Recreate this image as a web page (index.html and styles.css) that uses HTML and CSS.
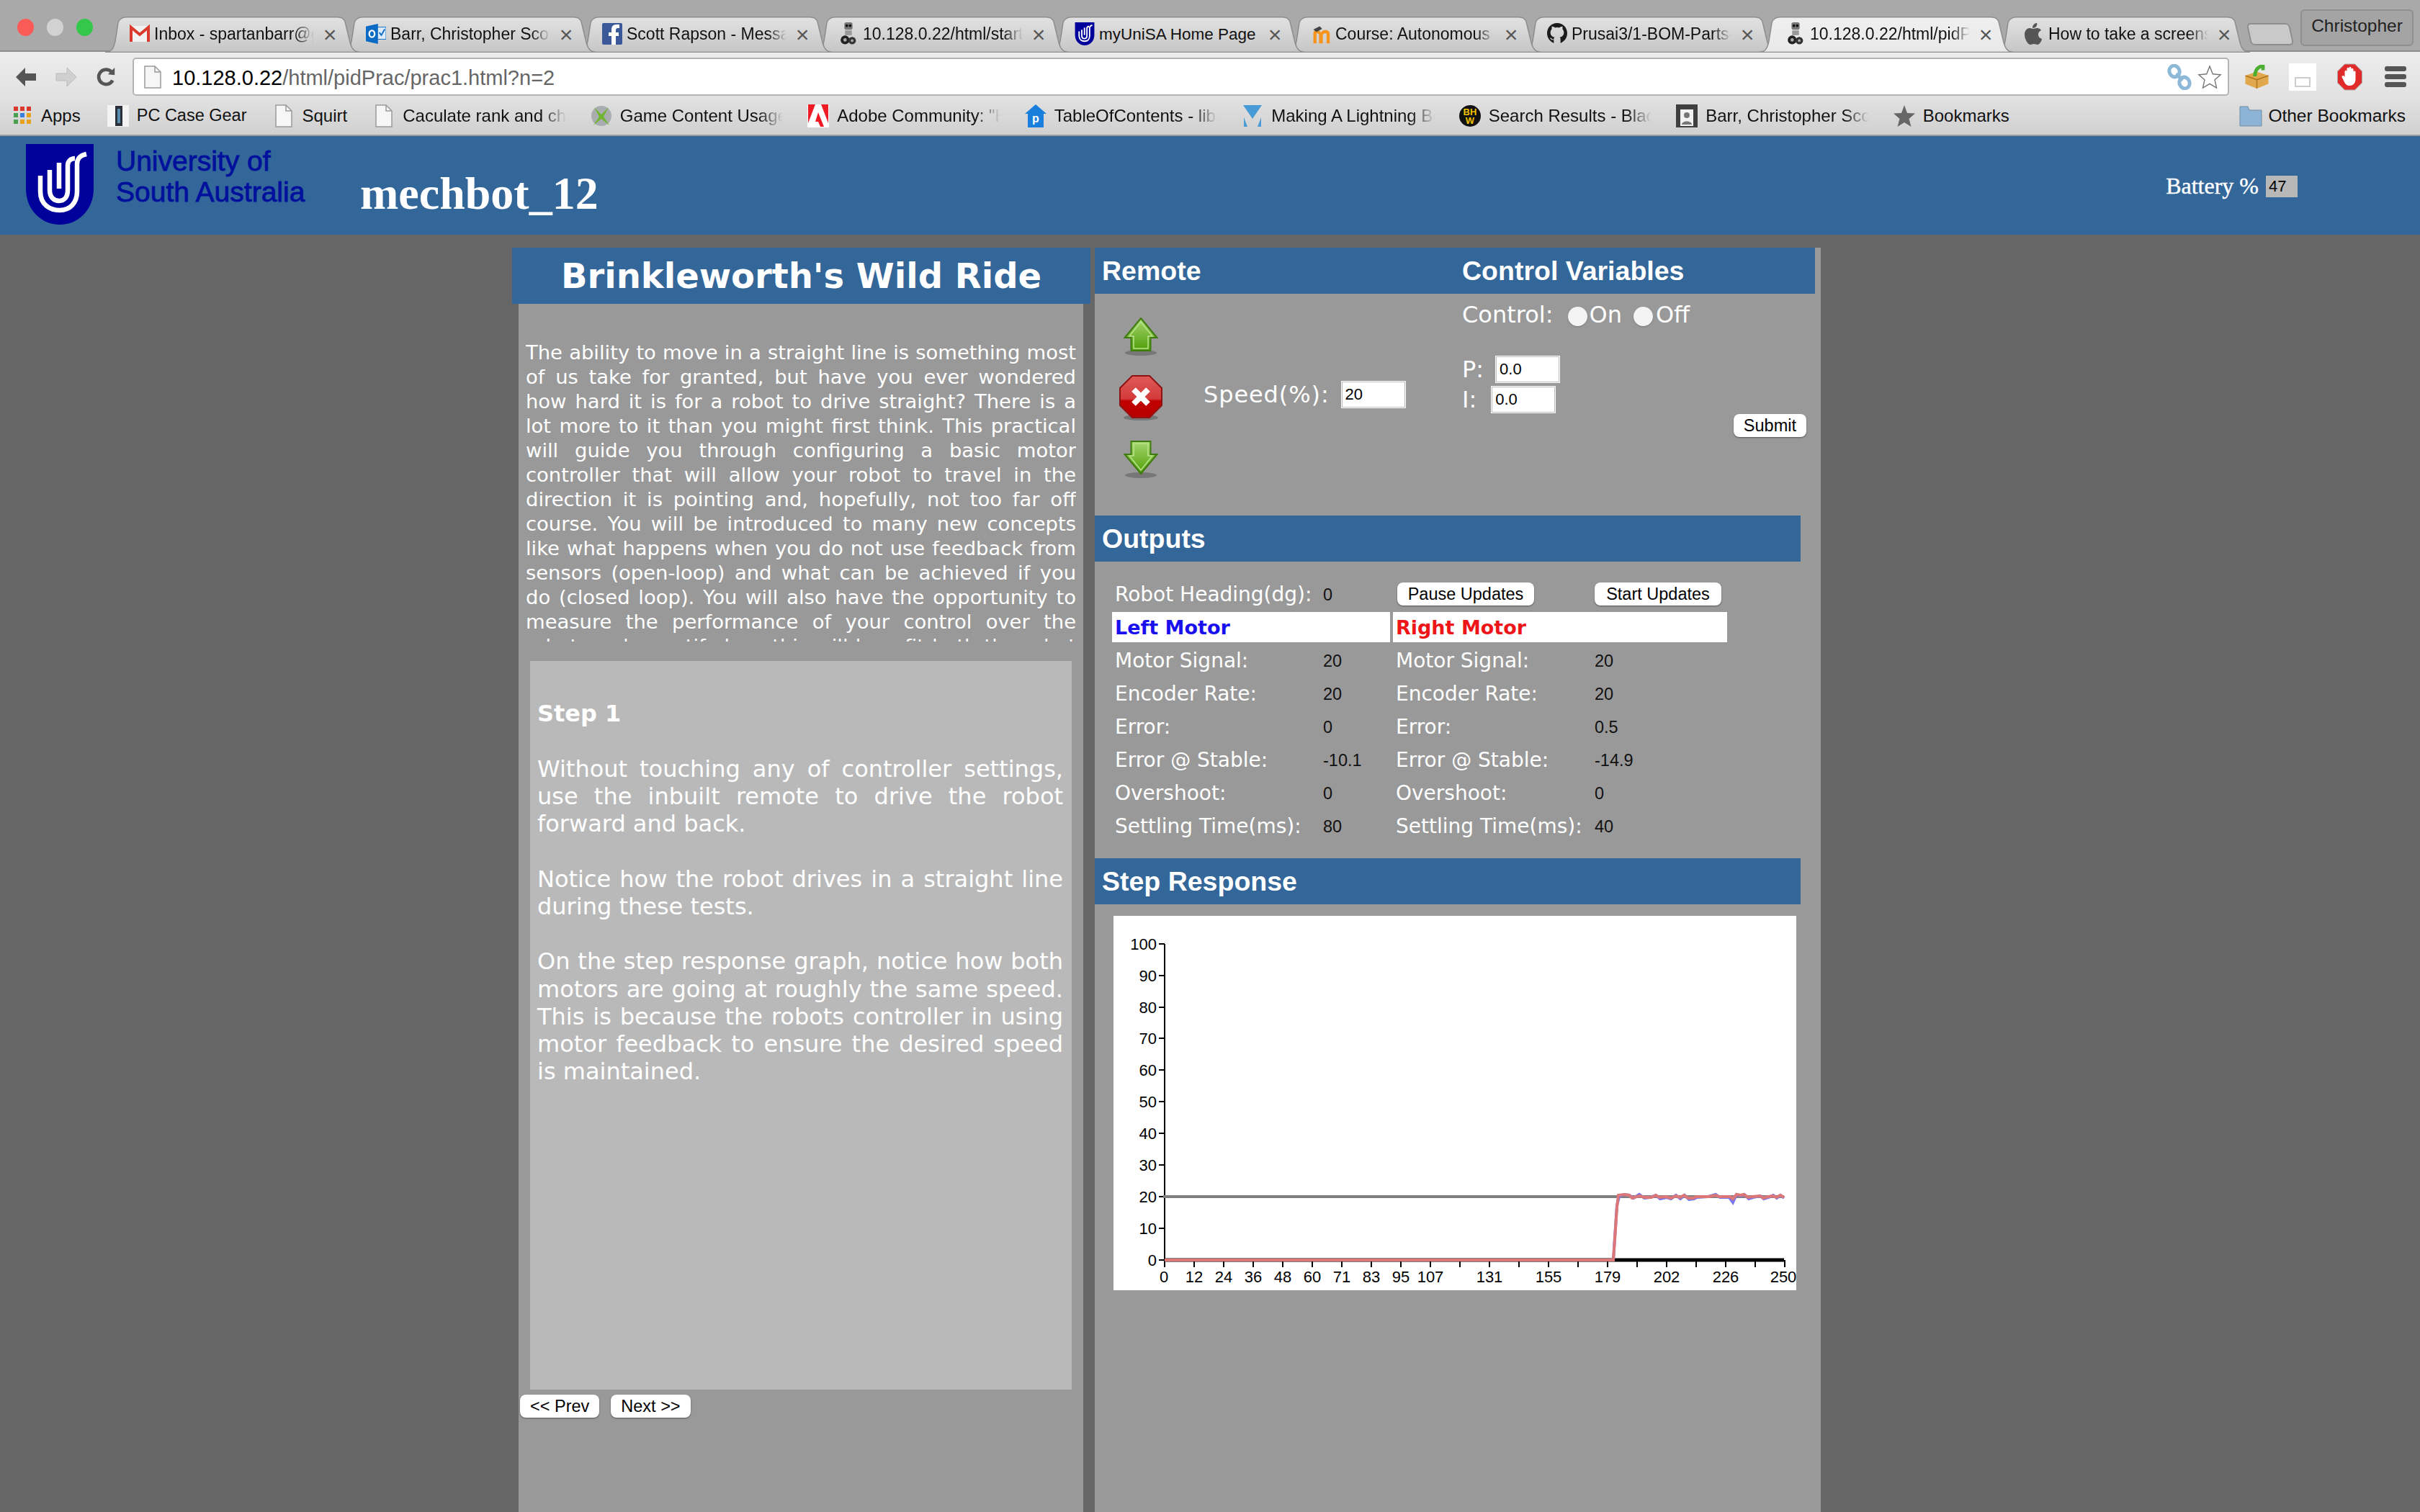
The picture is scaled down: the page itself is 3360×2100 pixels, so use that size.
FILE: index.html
```html
<!DOCTYPE html>
<html lang="en">
<head>
<meta charset="utf-8">
<title>mechbot_12</title>
<link rel="stylesheet" href="styles.css">
</head>
<body>
<svg class="defs" width="0" height="0" aria-hidden="true">
  <defs>
    <linearGradient id="tabg" x1="0" y1="0" x2="0" y2="1"><stop offset="0" stop-color="#e2e2e2"/><stop offset="1" stop-color="#c6c6c6"/></linearGradient>
    <linearGradient id="tabact" x1="0" y1="0" x2="0" y2="1"><stop offset="0" stop-color="#efefef"/><stop offset="1" stop-color="#e9e9e9"/></linearGradient>
    <linearGradient id="green" x1="0" y1="0" x2="0" y2="1"><stop offset="0" stop-color="#a5d66e"/><stop offset="1" stop-color="#4f9e08"/></linearGradient>
    <linearGradient id="red" x1="0" y1="0" x2="0" y2="1"><stop offset="0" stop-color="#de5a5a"/><stop offset=".55" stop-color="#d43a3a"/><stop offset=".6" stop-color="#c10000"/><stop offset="1" stop-color="#b80000"/></linearGradient>
    <symbol id="tabshape" viewBox="0 0 354 50" preserveAspectRatio="none">
      <path d="M0 49.5C9 49.5 12 44 14 34L18 9C19.500 3 23 .8 30 .8H322C329 .8 332 3 333.500 9L340 36C342.500 45 346 49.500 354 49.500Z" fill="url(#tabg)" stroke="#8e8e8e" stroke-width="1.500"/>
    </symbol>
    <symbol id="tabshape-active" viewBox="0 0 354 50" preserveAspectRatio="none">
      <path d="M0 49.5C9 49.5 12 44 14 34L18 9C19.500 3 23 .8 30 .8H322C329 .8 332 3 333.500 9L340 36C342.500 45 346 49.500 354 49.500Z" fill="url(#tabact)" stroke="#8e8e8e" stroke-width="1.500"/>
    </symbol>
    <symbol id="robot" viewBox="0 0 24 34">
      <rect x="6" y="0" width="12" height="11" rx="3" fill="#777"/><circle cx="9.500" cy="5" r="2" fill="#111"/><circle cx="14.500" cy="5" r="2" fill="#111"/>
      <rect x="7" y="12" width="10" height="7" fill="#999"/>
      <circle cx="7" cy="26" r="6.500" fill="#222"/><circle cx="17.500" cy="27" r="5.500" fill="#333"/><circle cx="7" cy="26" r="2.500" fill="#aaa"/><circle cx="17.500" cy="27" r="2" fill="#aaa"/>
    </symbol>
    <symbol id="shield" viewBox="0 0 94 112">
      <path d="M0 0H94V62C94 92 72 112 47 112C22 112 0 92 0 62Z" fill="#00009a"/>
      <g fill="none" stroke="#fff" stroke-width="6.500">
        <path d="M20 44V66C20 84 33 92 47 92C61 92 71 82 71 66V28C71 20 75 16 84 14"/>
        <path d="M33 36V64C33 74 39 79 46 79C53 79 58 74 58 64V30C58 24 62 20 68 20"/>
        <path d="M46 26V62"/>
      </g>
    </symbol>
    <symbol id="doc" viewBox="0 0 24 32">
      <path d="M1 1H15L23 9V31H1Z" fill="#f6f6f6" stroke="#9a9a9a" stroke-width="1.500"/><path d="M15 1V9H23" fill="none" stroke="#9a9a9a" stroke-width="1.500"/>
    </symbol>
    <symbol id="arrow" viewBox="0 0 48 54">
      <ellipse cx="24" cy="49" rx="22" ry="4" fill="#777"/>
      <path d="M24 1 46.500 28H37.500V46H10.500V28H1.500Z" fill="url(#green)" stroke="#3e7a10" stroke-width="2"/>
      <path d="M24 6 40 26H34V43H14V26H8Z" fill="none" stroke="#b9e38a" stroke-width="1.500"/>
    </symbol>
    <symbol id="arrow-dn" viewBox="0 0 48 54">
      <ellipse cx="24" cy="49" rx="22" ry="4" fill="#777"/>
      <path d="M24 47 46.500 20H37.500V2H10.500V20H1.500Z" fill="url(#green)" stroke="#3e7a10" stroke-width="2"/>
      <path d="M24 42 40 22H34V5H14V22H8Z" fill="none" stroke="#b9e38a" stroke-width="1.500"/>
    </symbol>
  </defs>
</svg>

<div class="tabstrip">
  <div class="lights"><span class="light light-red"></span><span class="light light-grey"></span><span class="light light-green"></span></div>
  <div class="tabs">
    <div class="tab"><svg class="tab-bg"><use href="#tabshape"/></svg>
      <svg class="fav" viewBox="0 0 28 24"><rect x="0" y="1" width="28" height="22" fill="#f1f1f1"/><path d="M2 23V3L14 13 26 3V23" fill="none" stroke="#d93a2c" stroke-width="4"/></svg>
      <span class="tab-title">Inbox - spartanbarr@gmail.com</span><span class="tab-x">×</span></div>
    <div class="tab"><svg class="tab-bg"><use href="#tabshape"/></svg>
      <svg class="fav" viewBox="0 0 30 30"><rect x="11" y="5" width="19" height="18" fill="#dceafa" stroke="#0a6ac4"/><path d="M0 4 18 0V30L0 26Z" fill="#0a6ac4"/><ellipse cx="9" cy="15" rx="4" ry="5" fill="none" stroke="#fff" stroke-width="2.500"/><path d="M20 13 23 17 28 8" fill="none" stroke="#0a6ac4" stroke-width="2"/></svg>
      <span class="tab-title">Barr, Christopher Scott</span><span class="tab-x">×</span></div>
    <div class="tab"><svg class="tab-bg"><use href="#tabshape"/></svg>
      <svg class="fav" viewBox="0 0 28 30"><rect width="28" height="30" rx="2" fill="#3b5998"/><path d="M19 30V18H23V13H19V10C19 8 20 7 22 7H24V2H20C15 2 13 5 13 9V13H9V18H13V30Z" fill="#fff"/></svg>
      <span class="tab-title">Scott Rapson - Messages</span><span class="tab-x">×</span></div>
    <div class="tab"><svg class="tab-bg"><use href="#tabshape"/></svg>
      <svg class="fav"><use href="#robot"/></svg>
      <span class="tab-title">10.128.0.22/html/start.html</span><span class="tab-x">×</span></div>
    <div class="tab"><svg class="tab-bg"><use href="#tabshape"/></svg>
      <svg class="fav"><use href="#shield"/></svg>
      <span class="tab-title tab-title-full">myUniSA Home Page</span><span class="tab-x">×</span></div>
    <div class="tab"><svg class="tab-bg"><use href="#tabshape"/></svg>
      <svg class="fav" viewBox="0 0 32 30"><path d="M4 30V14C4 10 7 9 9 9C12 9 14 10 16 13C18 10 20 9 23 9C27 9 30 11 30 16V30H25V16C25 14 24 14 23 14C21 14 19 15 19 17V30H13V17C13 15 12 14 10 14C9 14 9 15 9 16V30Z" fill="#f7941e"/><path d="M4 8 14 3 18 7 9 12Z" fill="#444"/></svg>
      <span class="tab-title">Course: Autonomous Systems</span><span class="tab-x">×</span></div>
    <div class="tab"><svg class="tab-bg"><use href="#tabshape"/></svg>
      <svg class="fav" viewBox="0 0 30 32"><path d="M15 0C6 0 0 7 0 15C0 22 4 27 10 30V25C6 26 5 23 4 22C7 22 8 25 10 24C10 23 10 22 11 21C7 20 5 18 5 14C5 12 6 10 7 9C7 8 7 6 7 5C9 5 11 6 12 7C14 6 16 6 18 7C19 6 21 5 23 5C23 6 23 8 23 9C24 10 25 12 25 14C25 18 23 20 19 21C20 22 20 24 20 25V30C26 27 30 22 30 15C30 7 24 0 15 0Z" fill="#1b1b1b"/></svg>
      <span class="tab-title">Prusai3/1-BOM-Parts-List</span><span class="tab-x">×</span></div>
    <div class="tab tab-active"><svg class="tab-bg"><use href="#tabshape-active"/></svg>
      <svg class="fav"><use href="#robot"/></svg>
      <span class="tab-title">10.128.0.22/html/pidPrac/prac1</span><span class="tab-x">×</span></div>
    <div class="tab tab-last"><svg class="tab-bg"><use href="#tabshape"/></svg>
      <svg class="fav" viewBox="0 0 28 30"><path d="M20 16C20 12 23 11 24 10C22 7 19 7 18 7C16 7 15 8 13 8C11 8 10 7 8 7C5 7 1 10 1 16C1 23 6 30 9 30C11 30 12 29 14 29C16 29 17 30 19 30C22 30 25 24 25 22C23 21 20 20 20 16ZM17 5C18 3 19 2 18 0C16 0 14 1 13 3C12 4 12 6 12 7C14 7 16 6 17 5Z" fill="#555"/></svg>
      <span class="tab-title">How to take a screenshot</span><span class="tab-x">×</span></div>
  </div>
  <div class="newtab"></div>
  <div class="profile">Christopher</div>
</div>

<div class="toolbar">
  <div class="nav">
    <svg class="nav-ico" viewBox="0 0 30 28"><path d="M1 14 14 1V9H29V19H14V27Z" fill="#555"/></svg>
    <svg class="nav-ico" viewBox="0 0 30 28"><path d="M29 14 16 1V9H1V19H16V27Z" fill="#d0d0d0" stroke="#bbb"/></svg>
    <svg class="nav-ico" viewBox="0 0 30 30"><path d="M24 20A11 11 0 1 1 22 7" fill="none" stroke="#555" stroke-width="5"/><path d="M17 11 27 12V1Z" fill="#555"/></svg>
  </div>
  <div class="url">
    <svg class="url-doc"><use href="#doc"/></svg>
    <span class="url-text"><span class="url-host">10.128.0.22</span>/html/pidPrac/prac1.html?n=2</span>
    <svg class="url-ico" viewBox="0 0 34 36"><g fill="none" stroke="#8db8d8" stroke-width="5"><ellipse cx="10" cy="10" rx="7" ry="8" transform="rotate(-20 10 10)"/><ellipse cx="24" cy="26" rx="7" ry="8" transform="rotate(-20 24 26)"/><path d="M12 14 22 22"/></g></svg>
    <svg class="url-ico" viewBox="0 0 36 36"><path d="M18 2 22.500 13.500 34 14.500 25.500 22 28 34 18 28 8 34 10.500 22 2 14.500 13.500 13.500Z" fill="#fff" stroke="#777" stroke-width="1.500"/></svg>
  </div>
  <div class="extras">
    <svg class="ext-ico" viewBox="0 0 38 36"><path d="M19 10 36 16V28L19 35 2 28V16Z" fill="#e2a94c"/><path d="M2 16 19 22 36 16M19 22V35" fill="none" stroke="#a9701e" stroke-width="1.500"/><path d="M16 17C16 8 20 3 28 1V8" fill="none" stroke="#4cae2e" stroke-width="5"/></svg>
    <div class="ext-blank"><span class="ext-blank-box"></span></div>
    <svg class="ext-ico ext-stop" viewBox="0 0 36 38"><path d="M11 1H25L35 11V27L25 37H11L1 27V11Z" fill="#e12b2b" stroke="#aaa"/><path d="M11 12C11 9 14 9 14 12V8C14 5 17 5 17 8V7C17 4 20 4 20 7V9C20 6 23 6 23 9V12C23 10 26 10 26 12V22C26 28 22 31 18 31C14 31 12 29 10 25L7 19C7 17 9 16 11 19Z" fill="#fff"/></svg>
    <div class="menu"><span></span><span></span><span></span></div>
  </div>
</div>

<div class="bookmarks">
  <div class="bm"><svg class="bm-ico" viewBox="0 0 32 32"><g><rect x="4" y="3" width="6" height="6" fill="#d9382e"/><rect x="13" y="3" width="6" height="6" fill="#d9382e"/><rect x="22" y="3" width="6" height="6" fill="#d9382e"/><rect x="4" y="12" width="6" height="6" fill="#4ba04f"/><rect x="13" y="12" width="6" height="6" fill="#3a7fe0"/><rect x="22" y="12" width="6" height="6" fill="#e9a21e"/><rect x="4" y="21" width="6" height="6" fill="#4ba04f"/><rect x="13" y="21" width="6" height="6" fill="#e9a21e"/><rect x="22" y="21" width="6" height="6" fill="#e9a21e"/></g></svg><span class="bm-text">Apps</span></div>
  <div class="bm"><svg class="bm-ico" viewBox="0 0 32 32"><rect x="1" y="1" width="30" height="30" fill="#f3f3f3"/><path d="M12 2H22V30H12Z" fill="#2a2f38"/><path d="M15 6H19V26H15Z" fill="#5a8bb0"/></svg><span class="bm-text">PC Case Gear</span></div>
  <div class="bm"><svg class="bm-ico"><use href="#doc"/></svg><span class="bm-text">Squirt</span></div>
  <div class="bm"><svg class="bm-ico"><use href="#doc"/></svg><span class="bm-text bm-fade">Caculate rank and change</span></div>
  <div class="bm"><svg class="bm-ico" viewBox="0 0 32 32"><circle cx="16" cy="16" r="14" fill="#a9adb0"/><path d="M6 4 16 14 26 4 19 17 27 29 16 20 5 29 13 17Z" fill="#6fb52e"/></svg><span class="bm-text bm-fade">Game Content Usage Rules</span></div>
  <div class="bm"><svg class="bm-ico" viewBox="0 0 32 32"><rect x="1" y="0" width="30" height="32" fill="#fff"/><path d="M2 0H12L2 26ZM30 0H20L30 26ZM16 11 24 31H19L16 24H12Z" fill="#ed1c24"/></svg><span class="bm-text bm-fade">Adobe Community: "How</span></div>
  <div class="bm"><svg class="bm-ico" viewBox="0 0 32 32"><path d="M16 0 31 13H27V32H5V13H1Z" fill="#1a7fdc"/><text x="16" y="25" class="bm-mini">p</text></svg><span class="bm-text bm-fade">TableOfContents - libmaple</span></div>
  <div class="bm"><svg class="bm-ico" viewBox="0 0 32 32"><path d="M3 1H29L16 20ZM4 18 9 31H4ZM28 18V31H23Z" fill="#489bd6"/></svg><span class="bm-text bm-fade">Making A Lightning Bolt Effect</span></div>
  <div class="bm"><svg class="bm-ico" viewBox="0 0 32 32"><circle cx="16" cy="16" r="15" fill="#111"/><text x="16" y="15" class="bm-bhw">BH</text><text x="16" y="27" class="bm-bhw">W</text></svg><span class="bm-text bm-fade">Search Results - Black Hat</span></div>
  <div class="bm"><svg class="bm-ico" viewBox="0 0 32 32"><rect x="1" y="0" width="30" height="32" fill="#3f3f3f"/><rect x="7" y="7" width="18" height="23" fill="#f2f2f2"/><circle cx="16" cy="15" r="4" fill="#777"/><path d="M9 28C9 22 23 22 23 28Z" fill="#777"/></svg><span class="bm-text bm-fade">Barr, Christopher Scott</span></div>
  <div class="bm"><svg class="bm-ico" viewBox="0 0 32 32"><path d="M16 1 20 12 31 12.500 22.500 20 25.500 31 16 25 6.500 31 9.500 20 1 12.500 12 12Z" fill="#666"/></svg><span class="bm-text">Bookmarks</span></div>
  <div class="bm bm-other"><svg class="bm-ico" viewBox="0 0 32 32"><path d="M1 8V3H12L14 8H31V30H1Z" fill="#8db3d6" stroke="#6f8ea8"/></svg><span class="bm-text">Other Bookmarks</span></div>
</div>

<header class="site-header">
  <svg class="logo"><use href="#shield"/></svg>
  <div class="uni-name">University of<br>South Australia</div>
  <h1 class="robot-name">mechbot_12</h1>
  <div class="battery"><span>Battery %</span><span class="battery-val">47</span></div>
</header>

<main class="page">
  <section class="left-col">
    <h2 class="prac-title">Brinkleworth's Wild Ride</h2>
    <div class="left-panel">
      <div class="intro">
        <p>The ability to move in a straight line is something most of us take for granted, but have you ever wondered how hard it is for a robot to drive straight? There is a lot more to it than you might first think. This practical will guide you through configuring a basic motor controller that will allow your robot to travel in the direction it is pointing and, hopefully, not too far off course. You will be introduced to many new concepts like what happens when you do not use feedback from sensors (open-loop) and what can be achieved if you do (closed loop). You will also have the opportunity to measure the performance of your control over the robot, and quantify how this will benefit both the robot in the long term.</p>
      </div>
      <div class="step">
        <p class="step-head">Step 1</p>
        <p>Without touching any of controller settings, use the inbuilt remote to drive the robot forward and back.</p>
        <p>Notice how the robot drives in a straight line during these tests.</p>
        <p>On the step response graph, notice how both motors are going at roughly the same speed. This is because the robots controller in using motor feedback to ensure the desired speed is maintained.</p>
      </div>
      <div class="pager"><button class="btn">&lt;&lt; Prev</button><button class="btn">Next &gt;&gt;</button></div>
    </div>
  </section>

  <section class="right-col">
    <div class="bar bar-top"><h3 class="bar-title bar-remote">Remote</h3><h3 class="bar-title">Control Variables</h3></div>
    <div class="remote-body">
      <div class="remote">
        <div class="drive">
          <svg class="arrow"><use href="#arrow"/></svg>
          <svg class="stop" viewBox="0 0 60 64"><ellipse cx="30" cy="59" rx="24" ry="4" fill="#777"/><path d="M18 1H42L59 18V42L42 59H18L1 42V18Z" fill="url(#red)" stroke="#8e1414" stroke-width="2"/><path d="M20 20 40 40M40 20 20 40" stroke="#fff" stroke-width="8"/></svg>
          <svg class="arrow"><use href="#arrow-dn"/></svg>
        </div>
        <label class="speed">Speed(%):<input class="field" type="text" value="20"></label>
      </div>
      <div class="control">
        <div class="ctl-row">Control:<input class="radio radio-first" type="radio" name="c"><span>On</span><input class="radio radio-second" type="radio" name="c"><span>Off</span></div>
        <label class="gain gain-p">P:<input class="field" type="text" value="0.0"></label>
        <label class="gain gain-i">I:<input class="field" type="text" value="0.0"></label>
        <div class="submit-row"><button class="btn">Submit</button></div>
      </div>
    </div>

    <div class="bar bar-short"><h3 class="bar-title">Outputs</h3></div>
    <div class="outputs">
      <div class="lab">Robot Heading(dg):</div><div class="val">0</div>
      <div class="cell-btn"><button class="btn btn-pause">Pause Updates</button></div><div class="cell-btn"><button class="btn btn-start">Start Updates</button></div>
      <div class="motor motor-l">Left Motor</div><div class="motor motor-r">Right Motor</div>
      <div class="lab">Motor Signal:</div><div class="val">20</div><div class="lab">Motor Signal:</div><div class="val val-r">20</div>
      <div class="lab">Encoder Rate:</div><div class="val">20</div><div class="lab">Encoder Rate:</div><div class="val val-r">20</div>
      <div class="lab">Error:</div><div class="val">0</div><div class="lab">Error:</div><div class="val val-r">0.5</div>
      <div class="lab">Error @ Stable:</div><div class="val">-10.1</div><div class="lab">Error @ Stable:</div><div class="val val-r">-14.9</div>
      <div class="lab">Overshoot:</div><div class="val">0</div><div class="lab">Overshoot:</div><div class="val val-r">0</div>
      <div class="lab">Settling Time(ms):</div><div class="val">80</div><div class="lab">Settling Time(ms):</div><div class="val val-r">40</div>
    </div>

    <div class="bar bar-short"><h3 class="bar-title">Step Response</h3></div>
    <svg class="chart" viewBox="0 0 948 520">
      <path d="M71 39V478" class="axis"/>
      <path d="M63 39H71M63 83H71M63 127H71M63 170H71M63 214H71M63 258H71M63 302H71M63 346H71M63 390H71M63 434H71M63 478H71" class="axis"/>
      <path d="M71 478v10M112 478v10M153 478v10M194 478v10M235 478v10M276 478v10M317 478v10M358 478v10M399 478v10M440 478v10M481 478v10M522 478v10M563 478v10M604 478v10M645 478v10M686 478v10M727 478v10M768 478v10M809 478v10M850 478v10M891 478v10M932 478v10" class="axis"/>
      <g class="ylab"><text x="60" y="47">100</text><text x="60" y="91">90</text><text x="60" y="135">80</text><text x="60" y="178">70</text><text x="60" y="222">60</text><text x="60" y="266">50</text><text x="60" y="310">40</text><text x="60" y="354">30</text><text x="60" y="398">20</text><text x="60" y="442">10</text><text x="60" y="486">0</text></g>
      <g class="xlab"><text x="70" y="509">0</text><text x="112" y="509">12</text><text x="153" y="509">24</text><text x="194" y="509">36</text><text x="235" y="509">48</text><text x="276" y="509">60</text><text x="317" y="509">71</text><text x="358" y="509">83</text><text x="399" y="509">95</text><text x="440" y="509">107</text><text x="522" y="509">131</text><text x="604" y="509">155</text><text x="686" y="509">179</text><text x="768" y="509">202</text><text x="850" y="509">226</text><text x="930" y="509">250</text></g>
      <path d="M71 478H931" class="line-base"/>
      <path d="M69 390H931" class="line-set"/>
      <path d="M71 478H694L699 402 702 390 709 387 716 388 722 392 730 387 737 392 745 391 753 388 759 393 768 391 774 393 781 388 787 393 793 388 799 394 806 393 810 391 826 390 836 387 842 391 855 391 860 398 865 387 871 389 876 387 882 393 888 391 898 389 903 393 910 391 916 388 921 392 926 388 931 392" class="line-blue"/>
      <path d="M71 478H694L699 405 701 388 709 387 716 388 720 392 726 390 731 389 737 391 747 391 753 388 758 391 767 390 774 392 781 389 787 391 792 388 798 392 805 392 809 390 827 390 836 388 841 390 856 390 860 393 865 387 871 388 875 387 881 391 887 390 898 389 902 392 909 390 916 389 920 391 926 388 931 391" class="line-red"/>
    </svg>
  </section>
</main>
</body>
</html>
```
FILE: styles.css
```css
* { box-sizing: border-box; }
html, body { margin: 0; padding: 0; }
body {
  width: 3360px;
  height: 2100px;
  overflow: hidden;
  background: #666;
  font-family: "DejaVu Sans", sans-serif;
}
.defs { position: absolute; }

/* window chrome */
.tabstrip {
  height: 72px;
  display: flex;
  background: #a9a9a9;
  border-bottom: 2px solid #8e8e8e;
  font-family: "Liberation Sans", Arial, sans-serif;
  color: #111;
  position: relative;
}
.lights { width: 146px; display: flex; gap: 18px; padding: 26px 0 0 24px; }
.light { width: 23px; height: 24px; border-radius: 50%; }
.light-red { background: #fb5b57; }
.light-grey { background: #d2d2d2; }
.light-green { background: #34c84a; }
.tabs { display: flex; padding-top: 23px; }
.tab {
  position: relative;
  width: 354px;
  height: 49px;
  margin-right: -26px;
  display: flex;
  align-items: center;
  padding-left: 34px;
  font-size: 23px;
}
.tab:nth-child(1) { z-index: 9; }
.tab:nth-child(2) { z-index: 8; }
.tab:nth-child(3) { z-index: 7; }
.tab:nth-child(4) { z-index: 6; }
.tab:nth-child(5) { z-index: 5; }
.tab:nth-child(6) { z-index: 4; }
.tab:nth-child(7) { z-index: 3; }
.tab-active { z-index: 20 !important; padding-left: 37px; }
.tab-last { z-index: 1; padding-left: 40px; }
.tab-bg { position: absolute; left: 0; top: 0; width: 354px; height: 50px; }
.fav { position: relative; width: 28px; height: 32px; flex: none; margin-right: 6px; margin-top: -1px; }
.tab-title {
  position: relative;
  width: 222px;
  flex: none;
  white-space: nowrap;
  overflow: hidden;
  margin-top: 0;
  -webkit-mask-image: linear-gradient(to right, #000 88%, transparent 100%);
  mask-image: linear-gradient(to right, #000 88%, transparent 100%);
}
.tab-title-full { -webkit-mask-image: none; mask-image: none; font-size: 22.500px; }
.tab-x { position: relative; width: 24px; margin-left: 10px; text-align: center; font-size: 32px; line-height: 30px; color: #555; margin-top: 0; }
.newtab {
  position: absolute;
  left: 3122px;
  top: 32px;
  width: 60px;
  height: 31px;
  background: #c9c9c9;
  border: 2px solid #8e8e8e;
  border-radius: 6px;
  transform: skewX(12deg);
}
.profile {
  position: absolute;
  left: 3194px;
  top: 13px;
  width: 157px;
  height: 51px;
  background: #a4a4a4;
  border: 2px solid #8f8f8f;
  border-radius: 6px;
  text-align: center;
  font-size: 24.500px;
  line-height: 42px;
  color: #222;
}
.toolbar {
  height: 62px;
  display: flex;
  align-items: flex-start;
  padding-top: 8px;
  background: linear-gradient(#ececec, #e2e2e2);
}
.nav { width: 184px; height: 53px; display: flex; align-items: center; gap: 26px; padding-left: 21px; flex: none; }
.nav-ico { width: 30px; height: 28px; flex: none; }
.url {
  width: 2911px;
  height: 53px;
  flex: none;
  display: flex;
  align-items: center;
  background: #fff;
  border: 2px solid #b4b4b4;
  border-radius: 5px;
  padding-left: 14px;
  font-family: "Liberation Sans", Arial, sans-serif;
  font-size: 29px;
  color: #666;
}
.url-doc { width: 24px; height: 32px; margin-right: 15px; flex: none; }
.url-text { flex: 1; white-space: nowrap; padding-top: 3px; }
.url-host { color: #000; }
.url-ico { width: 34px; height: 36px; margin-right: 8px; flex: none; }
.extras { display: flex; align-items: center; height: 53px; flex: 1; padding-left: 20px; }
.ext-ico { width: 37px; height: 34px; flex: none; }
.ext-blank {
  width: 38px;
  height: 38px;
  flex: none;
  margin-left: 26px;
  background: #fff;
  display: flex;
  align-items: flex-end;
  justify-content: center;
  padding-bottom: 5px;
}
.ext-blank-box { width: 22px; height: 14px; border: 2px solid #ccc; }
.ext-stop { margin-left: 28px; height: 38px; }
.menu { margin-left: 30px; width: 30px; display: flex; flex-direction: column; gap: 4px; }
.menu span { height: 7px; border-radius: 3px; background: #555; }
.bookmarks {
  height: 55px;
  display: flex;
  align-items: center;
  gap: 33px;
  padding: 0 20px 0 15px;
  background: linear-gradient(#e2e2e2, #d0d0d0);
  border-bottom: 2px solid #9a9a9a;
  font-family: "Liberation Sans", Arial, sans-serif;
  font-size: 24px;
  color: #111;
}
.bm { display: flex; align-items: center; gap: 10px; }
.bm:first-child { margin-right: 3px; }
.bm:nth-child(2) .bm-text { font-size: 23.500px; }
.bm:nth-child(2), .bm:nth-child(3) { margin-right: 2px; }
.bm-other { margin-left: auto; font-size: 24.500px; gap: 8px; }
.bm-ico { width: 32px; height: 32px; flex: none; }
.bm-text { white-space: nowrap; }
.bm-fade {
  width: 226.500px;
  overflow: hidden;
  -webkit-mask-image: linear-gradient(to right, #000 85%, transparent 100%);
  mask-image: linear-gradient(to right, #000 85%, transparent 100%);
}
.bm-mini { font: bold 16px "Liberation Sans", sans-serif; fill: #fff; text-anchor: middle; }
.bm-bhw { font: bold 13px "Liberation Sans", sans-serif; fill: #f2c200; text-anchor: middle; }

/* site header */
.site-header {
  height: 137px;
  display: flex;
  align-items: flex-start;
  background: #336699;
  padding: 11px 170px 0 36px;
}
.logo { width: 94px; height: 112px; flex: none; }
.uni-name {
  margin: 2px 0 0 31px;
  width: 339px;
  font-family: "Liberation Sans", Arial, sans-serif;
  font-size: 39px;
  line-height: 43px;
  color: #00109c;
  -webkit-text-stroke: .8px #00109c;
}
.robot-name {
  margin: 32px 0 0 0;
  font-family: "Liberation Serif", "Times New Roman", serif;
  font-size: 64px;
  line-height: 74px;
  font-weight: bold;
  color: #fff;
}
.battery {
  margin: 40px 0 0 auto;
  display: flex;
  align-items: center;
  gap: 10px;
  font-family: "Liberation Serif", "Times New Roman", serif;
  font-size: 32px;
  line-height: 36px;
  color: #fff;
  -webkit-text-stroke: .4px #fff;
}
.battery-val {
  width: 44px;
  height: 30px;
  padding-left: 4px;
  background: #b8b8b8;
  color: #000;
  font-family: "Liberation Sans", Arial, sans-serif;
  font-size: 22px;
  line-height: 30px;
  margin-top: 2px;
  -webkit-text-stroke: 0;
}

/* page */
.page { display: flex; padding: 18px 0 0 711px; height: 1774px; }
.left-col { width: 803px; flex: none; display: flex; flex-direction: column; }
.prac-title {
  margin: 0;
  height: 78px;
  flex: none;
  background: #336699;
  color: #fff;
  text-align: center;
  font-size: 48px;
  line-height: 78px;
  font-weight: bold;
}
.left-panel { flex: 1; margin: 0 10px 0 9px; background: #999; padding: 28px 10px 0 10px; color: #fff; }
.intro { height: 441px; overflow: hidden; font-size: 27.400px; line-height: 34px; text-align: justify; }
.intro p { margin: 23px 0 0; }
.step {
  margin: 27px 6px 0 6px;
  height: 1012px;
  background: #b9b9b9;
  padding: 54px 12px 0 10px;
  font-size: 32px;
  line-height: 38.250px;
  text-align: justify;
}
.step p { margin: 0 0 38.250px; }
.step-head { font-weight: bold; }
.pager { display: flex; gap: 16px; margin: 7px 0 0 -8px; }
.btn {
  height: 32px;
  padding: 0 14px;
  border: 0;
  border-radius: 8px;
  background: #fff;
  box-shadow: 0 1px 2px #555;
  color: #000;
  font-family: "Liberation Sans", Arial, sans-serif;
  font-size: 23.500px;
  line-height: 32px;
}
.right-col { width: 1008px; flex: none; margin-left: 6px; background: #999; color: #fff; }
.bar { height: 64px; background: #336699; display: flex; align-items: center; padding-left: 10px; }
.bar-top { width: 1000px; }
.bar-short { width: 980px; }
.bar-title {
  margin: 0;
  font-family: "Liberation Sans", Arial, sans-serif;
  font-size: 37.500px;
  font-weight: bold;
  color: #fff;
}
.bar-remote { width: 500px; }
.remote-body { height: 308px; display: flex; }
.remote { width: 510px; flex: none; display: flex; align-items: center; padding: 0 0 18px 34px; }
.drive { display: flex; flex-direction: column; align-items: center; gap: 26px; width: 60px; }
.arrow { width: 48px; height: 54px; display: block; }
.stop { width: 60px; height: 64px; display: block; }
.speed { margin: -10px 0 0 57px; font-size: 32px; letter-spacing: .9px; display: flex; align-items: center; gap: 16px; }
.field {
  width: 90px;
  height: 38px;
  margin: 0;
  padding: 0 5px;
  border: 1px solid #fff;
  box-shadow: inset 0 0 0 1px #bdbdbd, inset 0 0 0 2px #fff;
  background: #fff;
  color: #000;
  font-family: "Liberation Sans", Arial, sans-serif;
  font-size: 22px;
  letter-spacing: 0;
}
.control { width: 478px; padding-top: 10px; font-size: 32px; }
.ctl-row { height: 38px; line-height: 38px; display: flex; align-items: center; }
.radio {
  appearance: none;
  width: 27px;
  height: 27px;
  margin: 4px 4px 0 8px;
  border-radius: 50%;
  background: #f4f4f4;
  box-shadow: 0 1px 2px #777;
}
.radio-first { margin-left: 21px; margin-right: 2px; }
.radio-second { margin-left: 16px; }
.gain { display: flex; align-items: center; height: 38px; }
.gain-p { gap: 16px; margin-top: 38px; }
.gain-i { gap: 20px; margin-top: 4px; }
.submit-row { display: flex; justify-content: flex-end; margin-top: 1px; }
.outputs {
  display: grid;
  grid-template-columns: 284px 98px 271px 189px;
  grid-template-rows: 44px 42px repeat(6, 43px);
  gap: 3px 4px;
  padding: 23px 0 24px 24px;
  font-size: 28px;
}
.lab { padding-left: 4px; line-height: 46px; white-space: nowrap; }
.cell-btn + .lab { line-height: 43px; }
.val {
  padding-left: 5px;
  line-height: 46px;
  color: #111;
  font-family: "Liberation Sans", Arial, sans-serif;
  font-size: 23.500px;
}
.val-r { padding-left: 5px; }
.cell-btn { display: flex; align-items: center; }
.btn-pause { margin-left: 6px; width: 190px; padding: 0; }
.btn-start { margin-left: 5px; width: 176px; padding: 0; }
.motor { background: #fff; font-size: 27px; font-weight: bold; line-height: 44px; padding-left: 4px; }
.motor-l { grid-column: 1 / 3; color: #1a10ee; }
.motor-r { grid-column: 3 / 5; color: #ee1518; }
.chart { display: block; width: 948px; height: 520px; margin: 16px 0 0 26px; background: #fff; }
.axis { fill: none; stroke: #000; stroke-width: 2; }
.ylab text, .xlab text { font: 22px "Liberation Sans", Arial, sans-serif; fill: #000; }
.ylab text { text-anchor: end; }
.xlab text { text-anchor: middle; }
.line-base { fill: none; stroke: #000; stroke-width: 5; }
.line-set { fill: none; stroke: #7f7f7f; stroke-width: 4; }
.line-blue { fill: none; stroke: #7777ee; stroke-width: 4; }
.line-red { fill: none; stroke: #dd7777; stroke-width: 4; }
```
